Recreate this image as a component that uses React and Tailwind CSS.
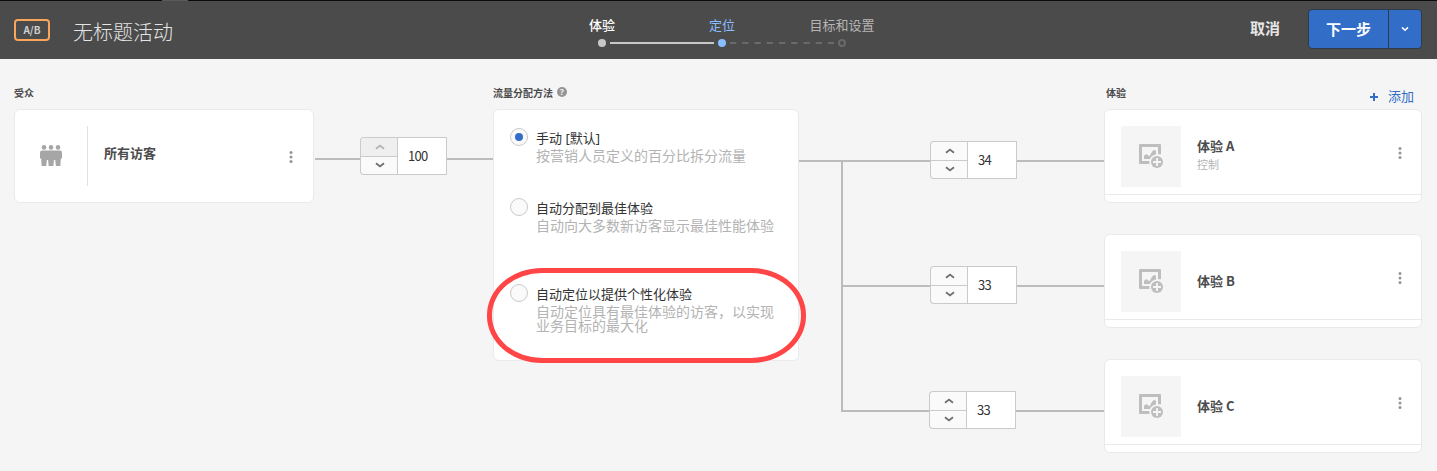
import React from "react";

function Dots({ className }) {
  return (
    <svg className={className} width="4" height="14" viewBox="0 0 4 14" fill="#959595">
      <circle cx="2" cy="2.4" r="1.5" />
      <circle cx="2" cy="7" r="1.5" />
      <circle cx="2" cy="11.6" r="1.5" />
    </svg>
  );
}

function Card({ className = "", children }) {
  return <div className={`rounded-md border border-[#eaeaea] bg-white ${className}`}>{children}</div>;
}

function Caret({ up, color }) {
  return (
    <svg width="10" height="6" viewBox="0 0 10 6" fill="none" stroke={color} strokeWidth="1.8">
      <path d={up ? "M1 4.8 L5 1.6 L9 4.8" : "M1 1.2 L5 4.4 L9 1.2"} />
    </svg>
  );
}

function Stepper({ value, maxed }) {
  return (
    <div className="flex h-[38px] w-[87px] shrink-0">
      <div className="flex w-[37px] flex-col rounded-l border border-r-0 border-[#cacaca] bg-[#fafafa]">
        <div
          className={`flex h-[18px] items-center justify-center rounded-tl pl-px ${maxed ? "bg-[#efefef]" : ""}`}
        >
          <Caret up color={maxed ? "#b3b3b3" : "#6e6e6e"} />
        </div>
        <div className="flex h-[18px] items-center justify-center border-t border-[#cacaca] pb-[2px] pl-px">
          <Caret color="#6e6e6e" />
        </div>
      </div>
      <div className="flex w-[50px] items-center border border-[#cacaca] bg-white pl-[10px] font-['Noto_Sans_CJK_SC',sans-serif] text-[13px] leading-[18px] tracking-[-0.7px] text-[#323232]">
        {value}
      </div>
    </div>
  );
}

function Line({ className }) {
  return <div className={`h-[2px] bg-[#bcbcbc] ${className}`} />;
}

function Step({ label, labelClass, children }) {
  return (
    <div className="flex w-[120px] flex-col items-center">
      <div className={`h-[18px] text-[13px] leading-[18px] ${labelClass}`}>{label}</div>
      <div className="mt-[4px] flex h-[10px] items-center">{children}</div>
    </div>
  );
}

function Header() {
  return (
    <header className="flex h-[59px] flex-col bg-[#4b4b4b]">
      <div className="flex h-px bg-[#0c0c0c]">
        <div className="ml-[162px] w-[26px] bg-[#5a5a5a]" />
      </div>
      <div className="flex flex-1">
        <div className="ml-[14px] mt-[18px] flex h-[22px] w-[36px] items-center justify-center rounded border-2 border-[#f9a55a] font-['Noto_Sans_CJK_SC',sans-serif] text-[10px] font-bold leading-4 text-[#d0d0d0]">
          A/B
        </div>
        <div className="ml-[23px] mt-[18px] h-[28px] w-[469px] text-[20px] font-light leading-[27px] text-[#e4e4e4]">
          无标题活动
        </div>
        <div className="mt-[15px] flex">
          <Step label="体验" labelClass="font-medium text-white">
            <span className="h-2 w-2 rounded-full bg-[#c8c8c8]" />
          </Step>
          <Step label="定位" labelClass="text-[#88bdff]">
            <span className="h-2 w-2 rounded-full bg-[#88bdff]" />
          </Step>
          <Step label="目标和设置" labelClass="text-[#b5b5b5]">
            <span className="h-2 w-2 rounded-full border-2 border-[#6a6a6a]" />
          </Step>
        </div>
        <svg className="-ml-[292px] mt-[41px]" width="224" height="2">
          <rect x="0" y="0" width="104" height="2" fill="#c8c8c8" />
          <path d="M120 1 H224" stroke="#6a6a6a" strokeWidth="2" strokeDasharray="6.2 6.05" />
        </svg>
        <div className="ml-auto mt-[18px] h-5 text-[15px] font-bold leading-[19px] text-[#e6e6e6]">取消</div>
        <div className="ml-[28px] mr-[15px] mt-[8px] flex h-[40px] w-[114px] rounded border border-[#303a48] bg-[#326ec8]">
          <div className="flex w-[80px] items-center justify-center border-r border-[#303a48] text-[15px] font-bold text-white">
            下一步
          </div>
          <div className="flex flex-1 items-center justify-center">
            <svg width="8" height="6" viewBox="0 0 8 6" fill="none" stroke="#fff" strokeWidth="1.5">
              <path d="M1 1.4 L4 4.2 L7 1.4" />
            </svg>
          </div>
        </div>
      </div>
    </header>
  );
}

function PeopleIcon() {
  return (
    <svg className="-mt-[2px]" width="22" height="21" viewBox="0 0 22 21" fill="#a6a6a6">
      <circle cx="4" cy="2.4" r="2.3" />
      <circle cx="11" cy="2.4" r="2.3" />
      <circle cx="18" cy="2.4" r="2.3" />
      <path d="M2 5.6 H20 Q22 5.6 22 7.6 V13.5 H20.8 L20.4 21 H15.9 L15.2 15 H14 L13.4 21 H8.7 L8.1 15 H6.9 L6.2 21 H1.6 L1.2 13.5 H0 V7.6 Q0 5.6 2 5.6 Z" />
    </svg>
  );
}

function AddImageIcon() {
  return (
    <svg className="-mt-px" width="24" height="24" viewBox="0 0 24 24">
      <path
        fill="#bebebe"
        d="M1 0 H21 Q22 0 22 1 V10.2 H19 V3 H3 V17 H10.4 V20 H1 Q0 20 0 19 V1 Q0 0 1 0 Z"
      />
      <path fill="#bebebe" d="M5 15 V12 Q7 8.8 9.2 11.6 L10.5 12.2 L13.2 7.6 Q15.2 4.8 17 7.2 V10.4 Q12.5 11 11 15 Z" />
      <circle cx="18" cy="18" r="6" fill="#bebebe" />
      <path d="M18 14 V22 M14 18 H22" stroke="#f5f5f5" strokeWidth="1.9" />
    </svg>
  );
}

function Option({ title, text, checked, className = "" }) {
  return (
    <div className={`flex ${className}`}>
      <span className="flex h-[18px] w-[18px] shrink-0 items-center justify-center rounded-full border border-[#cacaca] bg-[#fafafa]">
        {checked && <span className="h-2 w-2 rounded-full bg-[#326ec8]" />}
      </span>
      <div className="ml-[8px] mt-px w-[241px]">
        <div className="h-5 text-[13px] leading-[19px] text-[#323232]">{title}</div>
        <div className="text-[14px] leading-[14px] text-[#b3b3b3]">{text}</div>
      </div>
    </div>
  );
}

function Experience({ name, note }) {
  return (
    <Card className="flex h-[94px] flex-col">
      <div className="flex h-[85px] border-b border-[#eaeaea]">
        <div className="ml-[16px] mt-[16px] flex h-[61px] w-[60px] items-center justify-center bg-[#f5f5f5]">
          <AddImageIcon />
        </div>
        <div className={`ml-[16px] ${note ? "mt-[27px]" : "mt-[37px]"}`}>
          <div className="font-['Noto_Sans_CJK_SC',sans-serif] text-[13px] font-bold leading-[17px] text-[#4b4b4b]">
            {name}
          </div>
          {note && <div className="mt-[3px] text-[11px] leading-4 text-[#b3b3b3]">{note}</div>}
        </div>
        <Dots className="ml-auto mr-[19px] mt-[36px]" />
      </div>
    </Card>
  );
}

const experiences = [
  { name: "体验 A", note: "控制", share: 34 },
  { name: "体验 B", share: 33 },
  { name: "体验 C", share: 33 },
];

export default function App() {
  return (
    <div className="h-[471px] w-[1437px] overflow-hidden bg-[#f5f5f5] font-['Noto_Sans','Noto_Sans_CJK_SC',sans-serif]">
      <Header />
      <main className="flex pl-[14px] pt-[26px]">
        <section className="w-[300px]">
          <h2 className="h-6 text-[10px] font-bold leading-[17px] text-[#4b4b4b]">受众</h2>
          <Card className="flex h-[94px]">
            <div className="mt-[16px] flex h-[60px] w-[73px] items-center justify-center border-r border-[#e1e1e1]">
              <PeopleIcon />
            </div>
            <div className="ml-[16px] mt-[35px] text-[13px] font-bold leading-[17px] text-[#4b4b4b]">所有访客</div>
            <Dots className="ml-auto mr-[20px] mt-[40px]" />
          </Card>
        </section>

        <div className="mt-[52px] flex h-[38px] w-[179px] items-center pl-px pt-[6px]">
          <Line className="w-[45px]" />
          <div className="-mt-[6px]">
            <Stepper value={100} maxed />
          </div>
          <Line className="flex-1" />
        </div>

        <section className="relative w-[306px]">
          <h2 className="flex h-6 text-[10px] font-bold leading-[17px] text-[#4b4b4b]">
            流量分配方法
            <span className="ml-[4px] mt-[2px] flex h-[10px] w-[10px] items-center justify-center rounded-full bg-[#959595] text-[8px] leading-[10px] text-[#f5f5f5]">
              ?
            </span>
          </h2>
          <Card className="h-[252px] pl-[16px] pt-[18px]">
            <Option checked title="手动 [默认]" text="按营销人员定义的百分比拆分流量" />
            <Option className="mt-[35px]" title="自动分配到最佳体验" text="自动向大多数新访客显示最佳性能体验" />
            <Option
              className="mt-[51px]"
              title="自动定位以提供个性化体验"
              text="自动定位具有最佳体验的访客，以实现业务目标的最大化"
            />
          </Card>
          <div className="absolute -left-[6px] top-[183px] h-[95px] w-[319px] rounded-[55px/47px] border-[5px] border-[#ff4545]" />
        </section>

        <div className="flex pt-[75px]">
          <Line className="w-[42px]" />
          <div className="h-[252px] w-[2px] bg-[#bcbcbc]" />
          <div className="-mt-[19px] flex flex-col gap-[87px]">
            {experiences.map((e, i) => (
              <div key={e.name} className="flex h-[38px] w-[261px] items-center">
                <Line className={i === 2 ? "mt-[2px] w-[86px]" : "mt-[2px] w-[87px]"} />
                <Stepper value={e.share} />
                <Line className="mt-[2px] flex-1" />
              </div>
            ))}
          </div>
        </div>

        <section className="w-[318px]">
          <div className="flex h-6 justify-between pl-[2px] pr-[8px] text-[10px] leading-[17px]">
            <h2 className="font-bold text-[#4b4b4b]">体验</h2>
            <button className="mt-[3px] flex h-4 items-center gap-[10px] text-[13px] leading-4 text-[#326ec8]">
              <svg className="mt-px" width="8" height="8" viewBox="0 0 8 8" stroke="#326ec8" strokeWidth="2">
                <path d="M4 0 V8 M0 4 H8" />
              </svg>
              添加
            </button>
          </div>
          <div className="flex flex-col gap-[31px]">
            {experiences.map((e) => (
              <Experience key={e.name} name={e.name} note={e.note} />
            ))}
          </div>
        </section>
      </main>
    </div>
  );
}
